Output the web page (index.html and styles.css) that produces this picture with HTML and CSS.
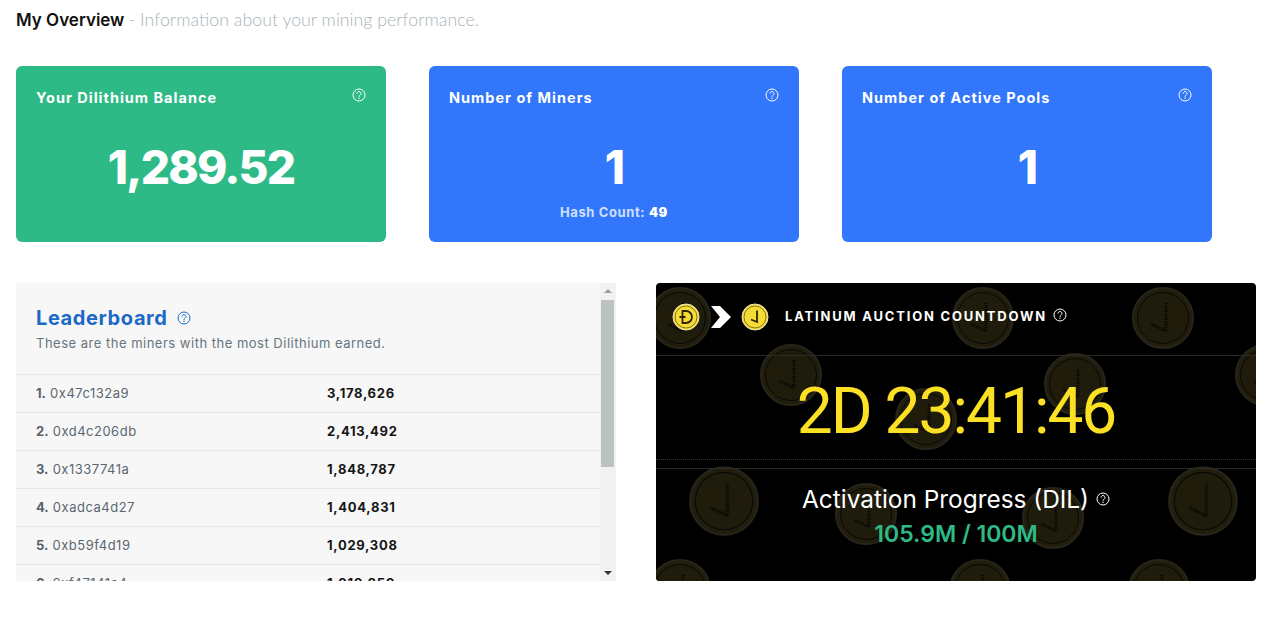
FILE: index.html
```html
<!DOCTYPE html>
<html lang="en">
<head>
    <meta charset="UTF-8">
    <title>My Overview</title>
    <link rel="stylesheet" href="styles.css">
</head>
<body>
    <svg class="defs" width="0" height="0">
        <symbol id="help" viewBox="0 0 14 14">
            <circle cx="7" cy="7" r="6" fill="none" stroke="currentColor" stroke-width="1"/>
            <path d="M5 5.6a2 2 0 1 1 3.1 1.6c-.7.5-1.1.8-1.1 1.6" fill="none" stroke="currentColor" stroke-width="1"/>
            <circle cx="7" cy="10.3" r=".7" fill="currentColor"/>
        </symbol>
        <symbol id="coin" viewBox="-32 -32 64 64">
            <circle r="30" fill="#211d0c" stroke="#27251a" stroke-width="2"/>
            <circle r="25.5" fill="#201c0b" stroke="#090805" stroke-width="1"/>
            <path d="M3 -15V13L-12 6" fill="none" stroke="#050505" stroke-width="3" stroke-dasharray="1 1"/>
        </symbol>
    </svg>

    <h1 class="page-title">My Overview <span>- Information about your mining performance.</span></h1>

    <div class="cards">
        <div class="card green">
            <div class="card-header">
                <span>Your Dilithium Balance</span>
                <svg class="help"><use href="#help"/></svg>
            </div>
            <div class="card-value">1,289.52</div>
        </div>
        <div class="card blue">
            <div class="card-header">
                <span>Number of Miners</span>
                <svg class="help"><use href="#help"/></svg>
            </div>
            <div class="card-value">1</div>
            <div class="card-note">Hash Count: <b>49</b></div>
        </div>
        <div class="card blue">
            <div class="card-header">
                <span>Number of Active Pools</span>
                <svg class="help"><use href="#help"/></svg>
            </div>
            <div class="card-value">1</div>
        </div>
    </div>

    <div class="panels">
        <div class="leaderboard">
            <div class="board-list">
                <div class="board-header">
                    <h2>Leaderboard <svg class="help"><use href="#help"/></svg></h2>
                    <p>These are the miners with the most Dilithium earned.</p>
                </div>
                <div class="row"><span class="miner"><b>1.</b> 0x47c132a9</span><span class="amount">3,178,626</span></div>
                <div class="row"><span class="miner"><b>2.</b> 0xd4c206db</span><span class="amount">2,413,492</span></div>
                <div class="row"><span class="miner"><b>3.</b> 0x1337741a</span><span class="amount">1,848,787</span></div>
                <div class="row"><span class="miner"><b>4.</b> 0xadca4d27</span><span class="amount">1,404,831</span></div>
                <div class="row"><span class="miner"><b>5.</b> 0xb59f4d19</span><span class="amount">1,029,308</span></div>
                <div class="row"><span class="miner"><b>6.</b> 0xf47141c4</span><span class="amount">1,010,250</span></div>
            </div>
            <div class="scrollbar">
                <div class="arrow arrow-up"></div>
                <div class="track"><div class="thumb"></div></div>
                <div class="arrow arrow-down"></div>
            </div>
        </div>

        <div class="countdown">
            <svg class="coins" viewBox="0 0 600 298">
                <use href="#coin" x="-8" y="3" width="64" height="64"/>
                <use href="#coin" x="103" y="60" width="64" height="64"/>
                <use href="#coin" x="238" y="104" width="64" height="64"/>
                <use href="#coin" x="295" y="3" width="64" height="64"/>
                <use href="#coin" x="475" y="3" width="64" height="64"/>
                <use href="#coin" x="387" y="69" width="64" height="64"/>
                <use href="#coin" x="578" y="60" width="64" height="64"/>
                <use href="#coin" x="32" y="182" width="72" height="72"/>
                <use href="#coin" x="178" y="199" width="64" height="64"/>
                <use href="#coin" x="511" y="182" width="72" height="72"/>
                <use href="#coin" x="365" y="203" width="64" height="64"/>
                <use href="#coin" x="-8" y="275" width="64" height="64"/>
                <use href="#coin" x="292" y="275" width="64" height="64"/>
                <use href="#coin" x="471" y="275" width="64" height="64"/>
            </svg>
            <div class="auction">
                <svg class="token" viewBox="0 0 28 28">
                    <circle cx="14" cy="14" r="13" fill="#f7dc36" stroke="#e9e2b8" stroke-width="1"/>
                    <circle cx="14" cy="14" r="11" fill="none" stroke="#3a320a" stroke-width=".6"/>
                    <path d="M10.500 8h3.500a6 6 0 0 1 0 12h-3.500zM7.500 14h6" fill="none" stroke="#2c2508" stroke-width="1.800"/>
                </svg>
                <svg class="chevron" viewBox="0 0 20 22"><path d="M0 0h9l11 11-11 11H0l9-11z" fill="#fff"/></svg>
                <svg class="token" viewBox="0 0 28 28">
                    <circle cx="14" cy="14" r="13" fill="#f7dc36" stroke="#e9e2b8" stroke-width="1"/>
                    <circle cx="14" cy="14" r="11" fill="none" stroke="#3a320a" stroke-width=".6"/>
                    <path d="M16 7.500V19l-6-2.500" fill="none" stroke="#2c2508" stroke-width="1.800"/>
                </svg>
                <span class="auction-title">Latinum Auction Countdown</span>
                <svg class="help"><use href="#help"/></svg>
            </div>
            <div class="timer">2D 23:41:46</div>
            <div class="progress">
                <div class="progress-title">Activation Progress (DIL) <svg class="help"><use href="#help"/></svg></div>
                <div class="progress-value">105.9M / 100M</div>
            </div>
        </div>
    </div>
</body>
</html>
```

FILE: styles.css
```css
body {
    margin: 0;
    font-family: "Inter", "Noto Sans", sans-serif;
    background: #fff;
    color: #333;
}
.defs {
    display: block;
    height: 0;
}
.page-title {
    margin: 0;
    padding: 9px 16px 0;
    height: 56px;
    box-sizing: border-box;
    font-size: 17px;
    line-height: 20px;
    font-weight: 600;
    color: #111;
}
.page-title span {
    font-family: "Lato", sans-serif;
    font-size: 17.800px;
    font-weight: 300;
    color: #a9b4b8;
}
.help {
    width: 14px;
    height: 14px;
    flex: none;
}

/* top cards */
.cards {
    display: flex;
    gap: 43px;
    padding: 10px 16px 0;
}
.card {
    width: 370px;
    height: 176px;
    box-sizing: border-box;
    padding: 23px 20px 0;
    border-radius: 6px;
    color: #fff;
}
.green { background: #2eba86; }
.blue { background: #3276fb; }
.card-header {
    display: flex;
    justify-content: space-between;
    font-size: 14.500px;
    line-height: 18px;
    font-weight: 700;
    letter-spacing: 1px;
}
.card-header .help {
    margin: -1px 0 0;
}
.card-value {
    margin-top: 31px;
    text-align: center;
    font-size: 46px;
    line-height: 58px;
    font-weight: 800;
    letter-spacing: -1.800px;
}
.card-note {
    margin-top: 8px;
    text-align: center;
    font-size: 13px;
    line-height: 16px;
    font-weight: 700;
    letter-spacing: .6px;
    color: #cfe0ff;
}
.card-note b {
    color: #fff;
}

/* bottom panels */
.panels {
    display: flex;
    gap: 40px;
    padding: 41px 16px 0;
}
.leaderboard {
    display: flex;
    width: 600px;
    height: 298px;
    overflow: hidden;
    background: #f7f7f7;
    border-radius: 4px 0 0 4px;
}
.board-list {
    flex: 1;
    min-width: 0;
}
.board-header {
    height: 92px;
    box-sizing: border-box;
    padding: 22px 20px 0;
    border-bottom: 1px solid #e6e8e8;
}
.board-header h2 {
    margin: 0;
    display: flex;
    align-items: center;
    gap: 9px;
    font-size: 20px;
    line-height: 26px;
    font-weight: 700;
    letter-spacing: .6px;
    color: #1b69c7;
}
.board-header p {
    margin: 3px 0 0;
    font-size: 13px;
    line-height: 18px;
    letter-spacing: .5px;
    color: #66757f;
}
.row {
    display: flex;
    height: 38px;
    box-sizing: border-box;
    align-items: center;
    padding: 0 20px 2px;
    border-bottom: 1px solid #e6e8e8;
    font-size: 13px;
}
.miner {
    width: 291px;
    flex: none;
    color: #5b6770;
    letter-spacing: .5px;
}
.miner b {
    font-weight: 700;
    color: #59626b;
    letter-spacing: 0;
}
.amount {
    font-weight: 700;
    color: #151515;
    letter-spacing: .7px;
}

/* scrollbar is drawn, the list itself doesn't scroll in the shot */
.scrollbar {
    display: flex;
    flex-direction: column;
    align-items: center;
    width: 16px;
    flex: none;
    background: #f1f2f1;
}
.arrow {
    width: 0;
    height: 0;
    flex: none;
    border-left: 4px solid transparent;
    border-right: 4px solid transparent;
}
.arrow-up {
    margin: 6px 0 7px;
    border-bottom: 4px solid #9a9f9c;
}
.arrow-down {
    margin: 7px 0 6px;
    border-top: 4px solid #333;
}
.track {
    flex: 1;
    width: 100%;
}
.thumb {
    width: 13px;
    height: 167px;
    margin-left: 1px;
    background: #bcc3bf;
}

/* countdown */
.countdown {
    position: relative;
    width: 600px;
    height: 298px;
    overflow: hidden;
    background: #000;
    border-radius: 4px;
    color: #fff;
}
.coins {
    position: absolute;
    left: 0;
    top: 0;
    width: 600px;
    height: 298px;
}
.auction, .timer, .progress {
    position: relative;
}
.auction {
    display: flex;
    align-items: center;
    height: 73px;
    box-sizing: border-box;
    padding: 0 0 5px 16px;
    border-bottom: 1px solid #2b2b25;
}
.token {
    width: 28px;
    height: 28px;
    flex: none;
}
.chevron {
    width: 20px;
    height: 22px;
    margin: 0 10px 0 11px;
    flex: none;
}
.auction-title {
    margin: 0 6px 2px 16px;
    font-size: 13px;
    font-weight: 700;
    letter-spacing: 1.800px;
    text-transform: uppercase;
}
.auction .help {
    margin-top: -4px;
}
.timer {
    height: 104px;
    box-sizing: border-box;
    border-bottom: 1px dotted #33332c;
    text-align: center;
    font-family: "Roboto", sans-serif;
    font-size: 64px;
    line-height: 112px;
    font-weight: 400;
    letter-spacing: -2px;
    color: #fbe024;
}
.progress {
    margin-top: 8px;
    padding-top: 15px;
    border-top: 1px solid #2b2b25;
    text-align: center;
}
.progress-title {
    display: flex;
    justify-content: center;
    align-items: center;
    gap: 7px;
    font-size: 24.400px;
    line-height: 30px;
    font-weight: 400;
}
.progress-value {
    margin-top: 6px;
    font-size: 23px;
    line-height: 28px;
    font-weight: 600;
    color: #2eba86;
}
```
